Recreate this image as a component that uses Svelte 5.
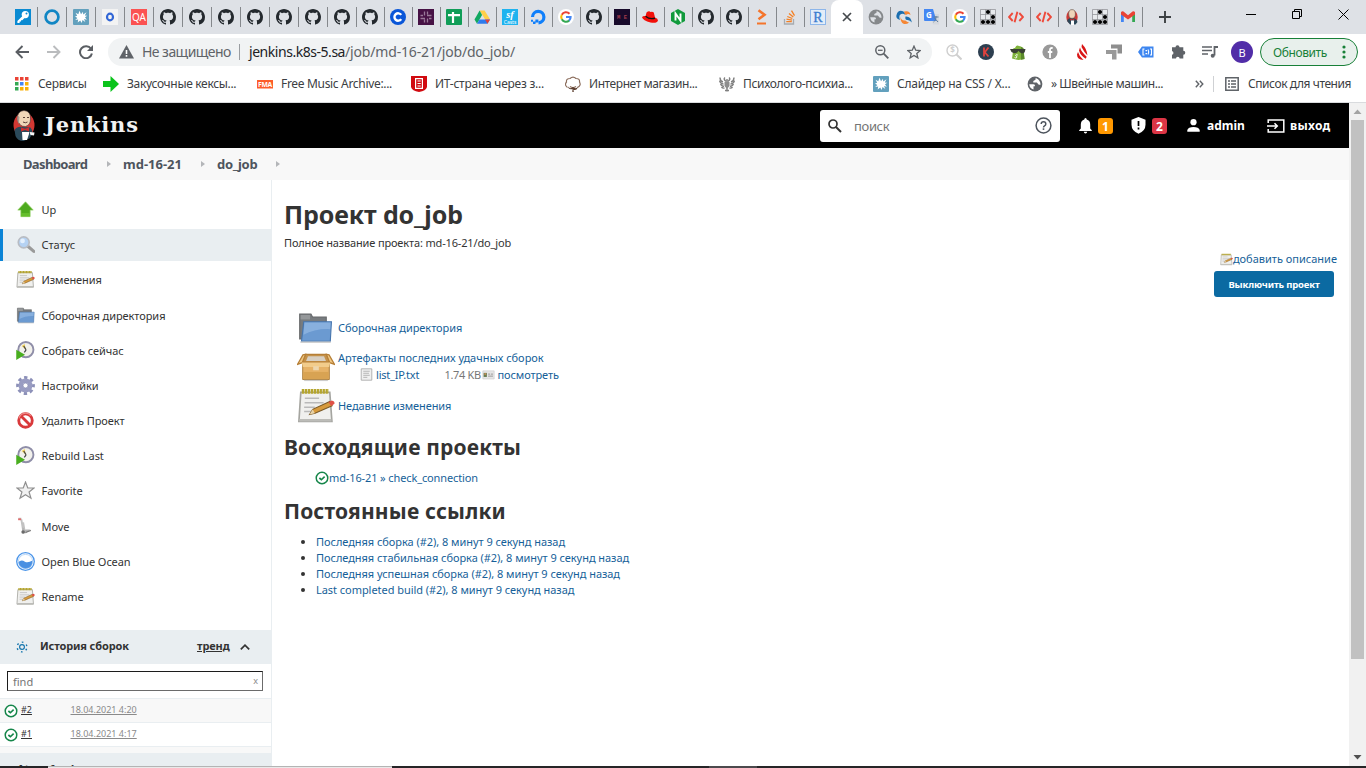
<script>
  const wide = ['key', 'ring', 'splat', 'oLetter', 'qa', 'github', 'github', 'github', 'github', 'github', 'github', 'github'];
  const narrow = ['github', 'cBlue', 'slack', 'sheet', 'drive', 'sfcasts', 'ocean', 'google', 'github', 'me', 'redhat', 'nginx', 'github', 'github', 'prompt', 'stack', 'rLetter'];
  const after = ['globe', 'swirl', 'translate', 'google', 'life', 'code', 'code', 'butler', 'life', 'gmail'];

  const bookmarks = [
    ['arrow', 'Закусочные кексы...'],
    ['fma', 'Free Music Archive:...'],
    ['itShield', 'ИТ-страна через з...'],
    ['cotton', 'Интернет магазин...'],
    ['eagle', 'Психолого-психиа...'],
    ['splat', 'Слайдер на CSS / X...'],
    ['globeDark', '» Швейные машин...']
  ];

  const extensions = ['searchCoin', 'kCircle', 'bag', 'facebook', 'flame', 'squares', 'tag', 'puzzle', 'playlist'];

  const tasks = [
    ['up', 'Up'],
    ['magnifier', 'Статус'],
    ['notepad', 'Изменения'],
    ['folder', 'Сборочная директория'],
    ['clock', 'Собрать сейчас'],
    ['gear', 'Настройки'],
    ['forbid', 'Удалить Проект'],
    ['clock', 'Rebuild Last'],
    ['star', 'Favorite'],
    ['mover', 'Move'],
    ['blueOcean', 'Open Blue Ocean'],
    ['notepad', 'Rename']
  ];

  const crumbs = ['Dashboard', 'md-16-21', 'do_job'];
  const builds = [['#2', '18.04.2021 4:20'], ['#1', '18.04.2021 4:17']];
  const permalinks = [
    'Последняя сборка (#2), 8 минут 9 секунд назад',
    'Последняя стабильная сборка (#2), 8 минут 9 секунд назад',
    'Последняя успешная сборка (#2), 8 минут 9 секунд назад',
    'Last completed build (#2), 8 минут 9 секунд назад'
  ];
</script>

{#snippet icon(name, size = 16)}
  <svg class="ico" width={size} height={size} viewBox="0 0 16 16" aria-hidden="true">
    {#if name === 'key'}
      <rect width="16" height="16" fill="#0a8ad2" />
      <circle cx="10.3" cy="5.6" r="3.6" fill="#fff" /><circle cx="11.5" cy="4.4" r="1" fill="#0a8ad2" />
      <path d="M8 6.5 2.4 12v2h2.2v-1.4H6v-1.4h1.3L10 8.6z" fill="#fff" />
    {:else if name === 'ring'}
      <circle cx="8" cy="8" r="6.4" fill="none" stroke="#1186c4" stroke-width="2.7" />
    {:else if name === 'splat'}
      <rect width="16" height="16" rx="1" fill="#62a0bd" />
      <path d="M6.5 1.8 8 5.200l2-2.400.2 2.700 3.300-2.200-1.700 3.200 2.400.3-2.200 1.400 1.800 2.500-2.800-.8 1.300 3-2.800-1.800-.8 2.800-1.500-2.500-2.500 2 .5-2.800-3 .3 2.200-1.900L2 7.500l2.200-.7-1.700-3 2.800 1.400z" fill="#fff" />
    {:else if name === 'oLetter'}
      <rect width="16" height="16" fill="#f3f3f3" /><ellipse cx="8" cy="8" rx="3" ry="3.3" fill="none" stroke="#3367d6" stroke-width="2.2" />
    {:else if name === 'qa'}
      <rect width="16" height="16" fill="#fb5252" /><text x="8" y="12.4" text-anchor="middle" font-size="11.5" textLength="14" lengthAdjust="spacingAndGlyphs" fill="#fff">QA</text>
    {:else if name === 'github'}
      <path fill="#24292e" d="M8 0C3.58 0 0 3.58 0 8c0 3.54 2.29 6.53 5.47 7.59.4.07.55-.17.55-.38 0-.19-.01-.82-.01-1.49-2.01.37-2.53-.49-2.69-.94-.09-.23-.48-.94-.82-1.13-.28-.15-.68-.52-.01-.53.63-.01 1.08.58 1.23.82.72 1.21 1.87.87 2.33.66.07-.52.28-.87.51-1.07-1.78-.2-3.64-.89-3.64-3.95 0-.87.31-1.59.82-2.15-.08-.2-.36-1.02.08-2.12 0 0 .67-.21 2.2.82.64-.18 1.32-.27 2-.27s1.36.09 2 .27c1.53-1.04 2.2-.82 2.2-.82.44 1.1.16 1.92.08 2.12.51.56.82 1.27.82 2.15 0 3.07-1.87 3.75-3.65 3.95.29.25.54.73.54 1.48 0 1.07-.01 1.93-.01 2.2 0 .21.15.46.55.38A8.01 8.01 0 0 0 16 8c0-4.42-3.58-8-8-8z" />
    {:else if name === 'cBlue'}
      <circle cx="8" cy="8" r="8" fill="#0a56d8" /><path d="M11.2 5.9A3.7 3.7 0 1 0 11.2 10.1" fill="none" stroke="#fff" stroke-width="2.4" />
    {:else if name === 'slack'}
      <rect width="16" height="16" fill="#471245" />
      <path d="M6.5 2.5v4M9.5 2.5v3M2.5 6.500H5M9 6.500h4.500M2.500 9.500H7M11 9.500h2.500M6.500 10.500v3M9.500 9.500v4" stroke="#9a7a99" stroke-width="1.3" />
    {:else if name === 'sheet'}
      <rect width="16" height="16" rx="1" fill="#109d58" /><path d="M7 3v11M2 6.2h12" stroke="#fff" stroke-width="2.2" />
    {:else if name === 'drive'}
      <path d="M5.6 1.5h5L16 10.3h-5z" fill="#ffcf48" /><path d="M5.6 1.5 8.1 6 3 14.7.5 10.5z" fill="#11a861" /><path d="M5.5 10.5H16l-2.5 4.2H3z" fill="#2f7bed" /><path d="m11 10.5 2.5 4.2 2.5-4.2z" fill="#e54335" />
    {:else if name === 'sfcasts'}
      <rect width="16" height="16" fill="#1fb3ef" /><text x="8" y="9" text-anchor="middle" font-size="10.5" font-style="italic" font-weight="700" font-family="Liberation Serif, serif" fill="#fff">sf</text><text x="8" y="14.6" text-anchor="middle" font-size="5" fill="#fff">Casts</text>
    {:else if name === 'ocean'}
      <path d="M2.5 8A5.7 5.7 0 1 1 8.5 13.8" fill="none" stroke="#0f7ffb" stroke-width="3.2" /><path d="M5.4 10.4h3V13.5h-3zM3 12.6h2.5V15H3zM1 10.8h2v2H1z" fill="#0f7ffb" />
    {:else if name === 'google'}
      <circle cx="8" cy="8" r="8" fill="#fff" />
      <path d="M8 8h4.6A4.8 4.8 0 0 1 11 11.7" fill="none" stroke="#4285f4" stroke-width="2.1" />
      <path d="M11.5 4.7A4.8 4.8 0 0 0 3.8 5.7" fill="none" stroke="#ea4335" stroke-width="2.1" />
      <path d="M3.8 5.7a4.8 4.8 0 0 0 0 4.6" fill="none" stroke="#fbbc05" stroke-width="2.1" />
      <path d="M3.8 10.3A4.8 4.8 0 0 0 11.1 11.6" fill="none" stroke="#34a853" stroke-width="2.1" />
    {:else if name === 'me'}
      <rect width="16" height="16" fill="#180a2b" /><text x="8" y="10.2" text-anchor="middle" font-size="5.5" font-family="Liberation Mono, monospace" font-weight="700" fill="#a43b4c">M E</text>
    {:else if name === 'redhat'}
      <path d="M4.5 3.5Q7 1.5 8.5 3q2-.8 3.3.5l1.2 5q3 1.2 3 3-1 3.2-7.5 2Q1 11.5 0 8.2 1 6.5 3.6 7z" fill="#f2100a" /><path d="M3.6 7.2q4 3.6 9.4 2" fill="none" stroke="#111" stroke-width="1.3" />
    {:else if name === 'nginx'}
      <path d="m8 0 7 4v8l-7 4-7-4V4z" fill="#119a3c" /><path d="M5.5 11.5v-7l5 7v-7" fill="none" stroke="#fff" stroke-width="1.9" />
    {:else if name === 'prompt'}
      <path d="m4.5 1.2 6 4.5-6 4.5" fill="none" stroke="#f4742b" stroke-width="2.6" /><path d="M3 14.5h9" stroke="#f4742b" stroke-width="2" />
    {:else if name === 'stack'}
      <path d="M2.5 10v5h9v-5" fill="none" stroke="#a7abb0" stroke-width="1.3" /><path d="M4.3 12.7h5.5M4.5 10.2l5.5.9M5.3 7.500l5 2M7 4.500l4.300 3.600M9.500 1.700l3 5" stroke="#f48024" stroke-width="1.3" />
    {:else if name === 'rLetter'}
      <rect x=".5" y=".5" width="15" height="15" fill="#e3edf8" stroke="#8db6ea" /><text x="8" y="12.7" text-anchor="middle" font-size="14" font-family="Liberation Serif, serif" fill="#3a7bd0" stroke="#3a7bd0" stroke-width=".3">R</text>
    {:else if name === 'globe' || name === 'globeDark'}
      <circle cx="8" cy="8" r="7.4" fill={name === 'globe' ? '#85888b' : '#5f6368'} />
      <path d="M2.2 8.3h4.3q1.8.2 1.5 2H6.5v3.2q-3.800-1-4.300-5.200zM8.500 2.200v1.500L6.300 5v1.600h3.500L11.500 8.500q1.500.6 2.100 0-.3-4.500-4.300-6.200z" fill={name === 'globe' ? '#dee1e6' : '#fff'} />
    {:else if name === 'swirl'}
      <path d="M.5 6Q2 .5 7 2.200q2.500 1 2.200 3.600Q6.500 3.500 3.800 6 2.800 8.500 4 11-.5 10 .5 6z" fill="#1c6fb0" /><path d="M8 2.500q6-1.500 6.500 3.500-2.500-2-4.500 0Q8.500 5.500 8 2.500z" fill="#f58634" /><path d="M9.500 7.500q5.500-.5 6.300 6-2-3-5-2.500Q8.800 10.500 9.500 7.500z" fill="#1c6fb0" /><path d="M4.500 7.500q.5 4.500 4.800 4Q11 13 13 13.500q-2 2-5 1.500-4-1.500-3.500-7.500z" fill="#f58634" />
    {:else if name === 'translate'}
      <path d="M6 5h9v10.500H9z" fill="#d5d8dd" /><path d="M0 0h9l3.500 12H1a1 1 0 0 1-1-1z" fill="#4487f2" /><text x="2" y="9" font-size="8" font-weight="700" fill="#fff">G</text><path d="M9.500 8h5M12 7v1c0 2-1 4-2.500 5m1-4 3.500 4" fill="none" stroke="#607d9b" />
    {:else if name === 'life'}
      <path d="M.5.5h15v15H.5zM5.500.5v15M10.500.5v15M.5 5.500h15M.5 10.500h15" fill="#e8eaed" stroke="#8b8d90" stroke-width=".7" /><circle cx="8" cy="3" r="2.1" /><circle cx="13" cy="8" r="2.1" /><circle cx="3" cy="13" r="2.1" /><circle cx="8" cy="13" r="2.1" /><circle cx="13" cy="13" r="2.1" />
    {:else if name === 'code'}
      <path d="M4.700 4 1 8l3.700 4M11.300 4 15 8l-3.700 4M9.400 2.800 6.600 13.200" fill="none" stroke="#ee4a3b" stroke-width="1.9" />
    {:else if name === 'butler'}
      <ellipse cx="8" cy="8" rx="5.7" ry="7" fill="#cf3835" /><path d="M3 12q1-3.500 5-3 4.500 0 5.500 4l-2 2.500H6z" fill="#2c4758" /><ellipse cx="8" cy="5" rx="3.4" ry="4.4" fill="#efd4b8" stroke="#5b4a43" stroke-width=".6" /><path d="M5 3Q4.500 6 5.500 7L4.700 4z" fill="#777" /><path d="m6.300 9.500 2 1 2-1v2.200l-2-1-2 1z" fill="#d02d2d" /><path d="M7 11.500h3V16H7z" fill="#fff" />
    {:else if name === 'gmail'}
      <path d="M1 3.500V13h2.800V6z" fill="#4285f4" /><path d="M12.200 6 15 3.500V13h-2.800z" fill="#34a853" /><path d="M1 3.300Q2 1.500 3.500 2.600L8 6.200l4.500-3.600Q14 1.500 15 3.300V5.500L8 10.500 1 5.500z" fill="#ea4335" />
    {:else if name === 'arrow'}
      <path d="M0 5h7.500V0L16 8l-8.500 8v-5H0z" fill="#0bc31c" />
    {:else if name === 'fma'}
      <rect y="4" width="16" height="8.5" fill="#fd5d2a" /><text x="8" y="11" text-anchor="middle" font-size="7.5" textLength="14" lengthAdjust="spacingAndGlyphs" font-weight="700" fill="#fff">FMA</text>
    {:else if name === 'itShield'}
      <path d="M0 0h16v11q-1 4-8 5-7-1-8-5z" fill="#d10a10" /><path d="M4.600 2.600h6.800v9.800H4.600zM6.500 5h3.200M6.500 7.500h3.200M6.500 10h3.200" fill="none" stroke="#fff" stroke-width="1.2" />
    {:else if name === 'cotton'}
      <path d="M2.500 11.500Q-1 9 1.500 6 1 2.500 5 2.500q3-2.800 6 0 4 0 3.500 3.500 2 3.500-2 5.500M5 10.500q3 2 6 0" fill="none" stroke="#8b6d5c" stroke-width="1.2" /><path d="M3 10.500q2.500 3 5 .5 3 2.500 5-.5-1 4.500-4.500 3.300L8.800 16H7.300l.2-3Q3.500 14 3 10.500z" fill="#5e4031" />
    {:else if name === 'eagle'}
      <path d="M1 1.500q0 3.500 3 4.500M.5 4.500Q1.500 8 4.500 8M1.500 8q1 2.500 3.500 2.200M2.500 11q1 1.500 3 1M15 1.500q0 3.500-3 4.500M15.500 4.500Q14.500 8 11.500 8M14.500 8q-1 2.500-3.500 2.200M13.500 11q-1 1.500-3 1M6 1.500q-2 1.500 1 4M10 1.500q2 1.500-1 4M8 3v12.500M6 14.500h4" fill="none" stroke="#808080" stroke-width="1.4" /><path d="M5.500 6h5v4L8 13l-2.500-3z" fill="#8d8d8d" />
    {:else if name === 'searchCoin'}
      <circle cx="6.5" cy="6.5" r="5.5" fill="none" stroke="#cfcfcf" stroke-width="1.4" /><path d="m10.500 10.500 5 5" stroke="#cfcfcf" stroke-width="2" /><text x="6.5" y="9.4" text-anchor="middle" font-size="8" font-weight="700" fill="#cfcfcf">$</text>
    {:else if name === 'kCircle'}
      <circle cx="8" cy="8" r="8" fill="#2d3f50" /><path d="M6 3.500v9M10.500 3.500 6.800 8.300l3.700 4.200" fill="none" stroke="#e0433e" stroke-width="1.8" />
    {:else if name === 'bag'}
      <path d="M5 4Q6.500.5 9 2l2 .5 2 1.500 1.500 11-6 1L2 14.500 3.500 4z" fill="#80b33c" /><path d="m11 3 2.500 1 1 11-3.500.7z" fill="#5b8a2b" /><path d="M0 5h15.500l-.8 3.300q-2.500 2.200-5 0L8.500 6.800 7.200 8.500Q4 10 1.500 8z" fill="#3b4135" /><path d="M7.800 11q-2-.8-2.200.5 2 1 1 2.200-1 .6-2-.2" fill="none" stroke="#fff" />
    {:else if name === 'facebook'}
      <circle cx="8" cy="8" r="7.6" fill="#999" /><path d="M10.700 4.200Q8 3.400 8 6v8M5.800 8h4.500" fill="none" stroke="#fff" stroke-width="1.8" />
    {:else if name === 'flame'}
      <path d="M8 0q5 5 5.500 11.500Q10 8 7.500 3z" fill="#d91515" /><path d="M6 3.500q1 4 6.700 9.300l-1 2Q6 11 5 6.500z" fill="#d91515" /><path d="M4 8q1 4 5.500 8Q3 15.500 3 10.500z" fill="#d91515" />
    {:else if name === 'squares'}
      <path d="M5 .5h11v9h-4.500V4.500H5z" fill="#8e8e8e" /><path d="M0 6h10.500v9.500H6V10H0z" fill="#999" />
    {:else if name === 'tag'}
      <path d="M4 2.500h11.500v11H4L0 8z" fill="#3d86f0" /><path d="M6.500 5H5v6h1.500M12 5h1.500v6H12M10 5.500q1.500 2.500 0 5" fill="none" stroke="#fff" stroke-width="1.1" /><path d="M7.500 6H9v1.300H7.500zM7.500 9H9v1.300H7.500z" fill="#fff" />
    {:else if name === 'puzzle'}
      <path d="M5.500 3.200a2 2 0 0 1 4 0h3.800v3.600a2 2 0 0 1 0 4v3.700H9.600a1.800 1.800 0 0 0-3.600 0H2V10.800a1.900 1.900 0 0 0 0-3.700V3.200z" fill="#5f6368" />
    {:else if name === 'playlist'}
      <path d="M0 3h10M0 6.500h10M0 10h6" stroke="#5f6368" stroke-width="1.7" /><path d="M16 3h-3.500v8.500" fill="none" stroke="#5f6368" stroke-width="1.8" /><circle cx="10.7" cy="11.8" r="2" fill="#5f6368" />
    {:else if name === 'up'}
      <path d="M8 1.500 14.500 8.500h-2.600v5.500H4.100V8.500H1.500z" fill="#4eaa1e" stroke="#8fcf62" stroke-width=".6" />
      <path d="M4.500 11h7v3h-7z" fill="#77cc35" opacity=".6" />
    {:else if name === 'magnifier'}
      <path d="m10 9.500 5 4.300" stroke="#9a9a9a" stroke-width="2.6" stroke-linecap="round" /><circle cx="6.5" cy="6.2" r="4.6" fill="#b5d2f3" stroke="#b8bcc3" stroke-width="1.4" /><circle cx="5.5" cy="5" r="2" fill="#e4f0fd" />
    {:else if name === 'notepad'}
      <path d="M1.600 2.200h12.200l.9 12.300H.8z" fill="#f0f0ee" stroke="#a5a5a0" stroke-width=".7" /><path d="M2 1.800h11.400" stroke="#b5a52e" stroke-width="2" stroke-dasharray="1 .25" /><path d="M3.300 4.700h6M3.200 6.600h8M3 8.500h4.500M3 10.300h3" stroke="#b9b9b9" stroke-width=".6" /><path d="M1 14h13.500" stroke="#bcbcb8" stroke-width="1" /><path d="m5.300 11.600 1.300-2.200 7.200-3.300 1 1.800-7.200 3.200z" fill="#d79a3c" stroke="#7a5a28" stroke-width=".45" /><path d="m5.300 11.600 1.300-2.200.9 1.700z" fill="#e8d3a8" /><path d="m13.300 6.400 1.300-.7q1.300.2 1.200 1.400l-1.400.9z" fill="#df5047" />
    {:else if name === 'folder'}
      <path d="M1.200 1.800h5l.7 1.300H13v9.800H1.200z" fill="#777b7e" stroke="#67696b" stroke-width=".5" /><path d="M1.600 2.200h4.200v2H1.600z" fill="#95989a" /><path d="M3 5.200h12.300l-.5 8.700H2z" fill="#6b9ad1" stroke="#4675ad" stroke-width=".5" /><path d="M3.300 5.500h11.700l-.2 3Q8 8.200 2.900 11z" fill="#94b9e4" opacity=".7" /><path d="M1.500 14.300h13.500" stroke="#c9c9c9" stroke-width=".6" />
    {:else if name === 'clock'}
      <circle cx="8.3" cy="7.3" r="6.4" fill="#f2f1ec" stroke="#8f8ea8" stroke-width="1.6" /><path d="M8.300 7.300 4.700 4.200 7.300 2.500z" fill="#f1d158" /><path d="m8.500 7.500-2-3.300M8.500 7.500 7 9.500" stroke="#454545" stroke-width="1" /><path d="M.2 7.300 7.600 11.600.2 15.900z" fill="#49ae1f" />
    {:else if name === 'gear'}
      <circle cx="8" cy="8" r="6.4" fill="none" stroke="#8c90b8" stroke-width="3" stroke-dasharray="2.7 2.327" stroke-dashoffset="1.35" /><circle cx="8" cy="8" r="4" fill="none" stroke="#999cc2" stroke-width="3.8" /><circle cx="8" cy="8" r="2" fill="#fff" stroke="#7e82ab" stroke-width=".5" />
    {:else if name === 'forbid'}
      <circle cx="8" cy="8" r="5.7" fill="#fff" stroke="#d9393b" stroke-width="2.4" /><path d="m4 4 8 8" stroke="#d9393b" stroke-width="2.4" /><path d="M2.500 6.200A5.700 5.700 0 0 1 12.500 4" fill="none" stroke="#ee8b89" stroke-width="1" />
    {:else if name === 'star'}
      <path d="m8 .9 1.900 5h5.300l-4.200 3.300 1.600 5.300L8 11.500l-4.600 3 1.600-5.300L.8 5.900h5.300z" fill="#f1f1f1" stroke="#8f8f8f" />
    {:else if name === 'mover'}
      <path d="M2 1.500h2.500M4.500 2 6 11.500M6 4.500l1 6" fill="none" stroke="#c2c2c2" stroke-width="1.6" /><path d="M1.800 1.200h2.500v1.500H1.800z" fill="#e36d6d" /><path d="M5.500 8.500 7.500 10.500H12l-3.500 3.200H5z" fill="#b4b4b4" /><circle cx="6" cy="12.7" r="1.5" fill="#6a6a6a" /><path d="m8 13 4.500-1.700" stroke="#777" />
    {:else if name === 'blueOcean'}
      <circle cx="8" cy="8" r="7.4" fill="#fff" stroke="#4b95e9" stroke-width="1.1" /><path d="M2 8.500q2.500-2.400 5.500-.3Q10 9.500 14 7.200 14 14 8 14 2.500 13.500 2 8.500z" fill="#4a90e2" /><circle cx="8" cy="8" r="6" fill="none" stroke="#8dbcf0" stroke-width=".5" />
    {:else if name === 'ok'}
      <circle cx="8" cy="8" r="6.6" fill="#fff" stroke="#16864a" stroke-width="1.7" /><path d="m5 8 2.300 2 3.700-3.500" fill="none" stroke="#16864a" stroke-width="1.9" />
    {:else if name === 'box'}
      <path d="M2.400 6.500h11.200v7.200H2.400z" fill="#e6b267" stroke="#a87a38" stroke-width=".4" /><path d="M2.600 10.500h10.800v3H2.600z" fill="#d8a353" /><path d="M3.600 3.100h8.800l1.400 3.300H2.200z" fill="#c49149" stroke="#b67f36" stroke-width=".5" /><path d="M4.600 3.900h6.800l.8 2H3.800z" fill="#d7cfc2" /><path d="M3.600 3.100 2.200 6.600.2 7.300 2.500 3.300zM12.400 3.100l1.400 3.500 2 .7-2.300-4z" fill="#efc783" stroke="#b67f36" stroke-width=".5" /><path d="m2 6.500.5 1.900h11l.5-1.900z" fill="#f2cc8b" /><path d="M6.800 8.100h2.400v1.700H6.800z" fill="#edd6ae" /><path d="M3 14.100h10" stroke="#ccc" stroke-width=".5" />
    {:else if name === 'textFile'}
      <path d="M1.500 1h13v14h-13z" fill="#f0f0f0" stroke="#a4a4a4" /><path d="M4 4h8M4 6.500h7M4 9h8M4 11.500h5" stroke="#aaa" stroke-width="1" />
    {:else if name === 'card'}
      <path d="M1 3.500h14v10H1z" fill="#e6e6e6" stroke="#c8c8c8" stroke-width=".7" /><path d="M2 6h4v5H2z" fill="#667b51" /><circle cx="4" cy="7.5" r="1.3" fill="#c18e58" /><path d="M7.500 7.500H10M11 7.500h2.500M7.500 10h6" stroke="#888" />
    {/if}
  </svg>
{/snippet}

<div class="browser">
  <header class="tabs">
    {#each wide as name}<div class="tab w29">{@render icon(name)}</div>{/each}
    {#each narrow as name, i}<div class="tab" class:last={i === narrow.length - 1}>{@render icon(name)}</div>{/each}
    <div class="tab-active">
      <svg width="10" height="10" viewBox="0 0 10 10"><path d="m1 1 8 8M9 1 1 9" stroke="#45494d" stroke-width="1.7" /></svg>
    </div>
    {#each after as name}<div class="tab">{@render icon(name)}</div>{/each}
    <svg class="plus" width="12" height="12" viewBox="0 0 12 12"><path d="M6 0v12M0 6h12" stroke="#3c4043" stroke-width="1.9" /></svg>
    <div class="winctl">
      <svg width="10" height="11" viewBox="0 0 10 11"><path d="M0 5.500h10" stroke="#000" /></svg>
      <svg width="10" height="10" viewBox="0 0 10 10"><path d="M.5 2.500h7v7h-7zM2.500 2V.5h7v7H8" fill="none" stroke="#000" /></svg>
      <svg width="11" height="11" viewBox="0 0 11 11"><path d="m.5.5 10 10M10.500.5l-10 10" stroke="#000" /></svg>
    </div>
  </header>

  <div class="toolbar">
    <svg class="nav" width="14" height="14" viewBox="0 0 14 14"><path d="M14 7H1.500M7.500 1l-6 6 6 6" fill="none" stroke="#5a5e63" stroke-width="1.9" /></svg>
    <svg class="nav" width="14" height="14" viewBox="0 0 14 14"><path d="M0 7h12.500M6.500 1l6 6-6 6" fill="none" stroke="#babcbe" stroke-width="1.9" /></svg>
    <svg class="nav" width="14" height="14" viewBox="0 0 14 14"><path d="M12 3.800A6 6 0 1 0 12.900 8.500" fill="none" stroke="#5a5e63" stroke-width="2" /><path d="M14 0v6H8z" fill="#5a5e63" /></svg>
    <div class="omnibox">
      <svg width="15" height="14" viewBox="0 0 15 14"><path d="M7.500 0 15 13.500H0z" fill="#5f6368" /><path d="M7.500 5v4M7.500 10v1.800" stroke="#fff" stroke-width="1.6" /></svg>
      <span class="insecure">Не защищено</span>
      <span class="bar"></span>
      <span class="url"><b>jenkins.k8s-5.sa</b><i>/job/md-16-21/job/do_job/</i></span>
      <svg class="zoomout" width="14" height="14" viewBox="0 0 14 14"><circle cx="5.3" cy="5.3" r="4.5" fill="none" stroke="#5f6368" stroke-width="1.5" /><path d="M3 5.300h4.600" stroke="#5f6368" stroke-width="1.3" /><path d="m8.700 8.700 4.600 4.600" stroke="#5f6368" stroke-width="1.9" /></svg>
      <svg width="14" height="14" viewBox="0 0 16 16"><path d="m8 1.300 2 4.700 5 .4-3.800 3.300 1.200 5L8 12l-4.400 2.700 1.200-5L1 6.400 6 6z" fill="none" stroke="#5f6368" stroke-width="1.5" /></svg>
    </div>
    <div class="exts">
      {#each extensions as name}{@render icon(name)}{/each}
    </div>
    <div class="avatar">В</div>
    <div class="update"><span>Обновить</span><svg width="4" height="14" viewBox="0 0 4 14"><circle cx="2" cy="2" r="1.6" /><circle cx="2" cy="7" r="1.6" /><circle cx="2" cy="12" r="1.6" /></svg></div>
  </div>

  <nav class="bookmarks">
    <svg width="14" height="14" viewBox="0 0 14 14">
      <path d="M0 0h3.500v3.500H0zM5 0h3.500v3.500H5zM10 0h3.500v3.500H10z" fill="#ea4335" /><path d="M0 5h3.500v3.500H0zM0 10h3.500v3.500H0z" fill="#34a853" /><path d="M5 5h3.500v3.500H5z" fill="#4285f4" /><path d="M10 5h3.500v3.500H10zM5 10h3.500v3.500H5zM10 10h3.500v3.500H10z" fill="#f9b004" />
    </svg>
    <span class="services">Сервисы</span>
    {#each bookmarks as [name, label], i}
      <div class="bm" class:tight={i === 3 || i === 6} class:loose={i === 2 || i === 5}>{@render icon(name)}<span>{label}</span></div>
    {/each}
    <svg class="more" width="9" height="8" viewBox="0 0 9 8"><path d="m.8.8 3 3.200-3 3.200M4.800.8l3 3.200-3 3.200" fill="none" stroke="#5f6368" stroke-width="1.4" /></svg>
    <span class="vsep"></span>
    <svg width="14" height="14" viewBox="0 0 14 14"><path d="M.8.8h12.400v12.400H.8z" fill="none" stroke="#5f6368" stroke-width="1.5" /><path d="M3 4h2M6 4h5M3 7h2M6 7h5M3 10h2M6 10h5" stroke="#5f6368" stroke-width="1.4" /></svg>
    <span class="reading">Список для чтения</span>
  </nav>

  <div class="viewport">
    <div class="page">
      <div class="jheader">
        <svg width="22" height="32" viewBox="0 0 22 32">
          <ellipse cx="11" cy="15" rx="10.5" ry="12.5" fill="#d33833" />
          <path d="M1.500 20q3-4 8-3l8 .5q2 2 2 6l-3 5-6 2.500q-6 0-8-5z" fill="#2b4a5b" />
          <path d="M4.500 9Q4 1 11 .5 18 1 17.500 9q0 6-5 7.500Q6 17 4.500 9z" fill="#f0d6b7" stroke="#433" stroke-width=".6" />
          <path d="M4.700 5.500Q3.500 10 5.800 14L6.500 7z" fill="#a89c92" /><path d="M10 7.500h2M14 7.500h2M10 12q2.500 1.500 4.500 0" stroke="#5a4036" stroke-width="1" fill="none" />
          <path d="m8 17.500 4 1.200 4-1.200v4l-4-1.500-4 1.500z" fill="#d02c2c" /><path d="M9 22h7v2l-2 6H9.500z" fill="#fff" /><path d="m16.500 22 5 .5-.5 3-3.500-.5z" fill="#f4f4f4" />
        </svg>
        <span class="brand">Jenkins</span>
        <div class="search">
          <svg width="14" height="14" viewBox="0 0 14 14"><circle cx="5" cy="5" r="4" fill="none" stroke="#333" stroke-width="1.7" /><path d="m8 8 5 5" stroke="#333" stroke-width="2" /></svg>
          <span>поиск</span>
          <svg width="17" height="17" viewBox="0 0 17 17"><circle cx="8.5" cy="8.5" r="7.4" fill="none" stroke="#4d545d" stroke-width="1.5" /><path d="M6.200 7Q6.200 4.800 8.500 4.800T10.800 7q0 1.200-1.300 1.900-1 .6-1 1.600" fill="none" stroke="#4d545d" stroke-width="1.5" /><path d="M8.500 11.300v1.600" stroke="#4d545d" stroke-width="1.6" /></svg>
        </div>
        <svg class="bell" width="13" height="16" viewBox="0 0 13 16"><path d="M6.500 0q1.200 0 1.200 1.600 3.500 1 3.500 5v4l1.600 1.600v.8H.2v-.8l1.600-1.600v-4q0-4 3.500-5Q5.300 0 6.500 0zM4.800 13.800h3.400Q8 15.600 6.500 15.600T4.800 13.800z" fill="#fff" /></svg>
        <span class="badge orange">1</span>
        <svg class="shield" width="15" height="17" viewBox="0 0 15 17"><path d="M7.500 0 14.500 2.800v5q0 6-7 9-7-3-7-9v-5z" fill="#fff" /><path d="M7.500 4v5M7.500 10.500v2" stroke="#000" stroke-width="1.7" /></svg>
        <span class="badge red">2</span>
        <svg class="person" width="13" height="13" viewBox="0 0 13 13"><circle cx="6.5" cy="3.2" r="3.1" fill="#fff" /><path d="M.3 12.700V11q1-3 6.200-3t6.200 3v1.700z" fill="#fff" /></svg>
        <b class="admin">admin</b>
        <svg class="logout" width="18" height="14" viewBox="0 0 18 14"><path d="M1.200 4V1h15.600v12H1.200v-3M0 7h10M7.500 4.200 10.300 7 7.500 9.800" fill="none" stroke="#fff" stroke-width="1.5" /></svg>
        <b class="exit">выход</b>
      </div>

      <div class="crumbs">
        {#each crumbs as c, i}
          <span class="crumb" class:first={i === 0} class:mid={i === 1}>{c}</span><svg width="4" height="6" viewBox="0 0 4 6"><path d="m0 0 4 3-4 3z" fill="#b4b6b9" /></svg>
        {/each}
      </div>

      <div class="body">
        <aside>
          <ul class="tasks">
            {#each tasks as [name, label], i}
              <li class:active={i === 1}>{@render icon(name, 19)}<span>{label}</span></li>
            {/each}
          </ul>
          <div class="history-head">
            <svg width="12" height="12" viewBox="0 0 12 12"><circle cx="6" cy="6" r="2.4" fill="none" stroke="#1676ae" stroke-width="1.2" /><circle cx="6" cy="6" r="4.9" fill="none" stroke="#1676ae" stroke-width="1.4" stroke-dasharray="1.7 3.431" stroke-dashoffset="3.4" /></svg>
            <b>История сборок</b>
            <b class="trend">тренд</b>
            <svg width="10" height="6" viewBox="0 0 10 6"><path d="m.8 5.400 4.200-4.200 4.200 4.200" fill="none" stroke="#333" stroke-width="1.7" /></svg>
          </div>
          <div class="find-wrap"><div class="find"><span>find</span><i>x</i></div></div>
          {#each builds as [num, date], i}
            <div class="build" class:odd={i === 0}>{@render icon('ok', 14)}<u class="num">{num}</u><u class="date">{date}</u></div>
          {/each}
          <div class="gap"></div>
          <div class="feeds"><b>Atom feed</b></div>
        </aside>

        <main>
          <h1>Проект do_job</h1>
          <div class="full">Полное название проекта: md-16-21/do_job</div>
          <div class="desc">
            <div class="adddesc">{@render icon('notepad', 13)}<span>добавить описание</span></div>
            <button>Выключить проект</button>
          </div>
          <div class="row r1">{@render icon('folder', 36)}<span>Сборочная директория</span></div>
          <div class="row r2">{@render icon('box', 38)}
            <div class="art"><span>Артефакты последних удачных сборок</span>
              <div class="file">{@render icon('textFile', 13)}<span class="fname">list_IP.txt</span><span class="size">1.74 KB</span>{@render icon('card', 13)}<span class="view">посмотреть</span></div>
            </div>
          </div>
          <div class="row r3">{@render icon('notepad', 38)}<span>Недавние изменения</span></div>
          <h2>Восходящие проекты</h2>
          <div class="up">{@render icon('ok', 14)}<span>md-16-21 » check_connection</span></div>
          <h2>Постоянные ссылки</h2>
          <ul class="links">
            {#each permalinks as p}<li><span>{p}</span></li>{/each}
          </ul>
        </main>
      </div>
    </div>
    <div class="scroll">
      <svg width="17" height="17" viewBox="0 0 17 17"><path d="m4.500 11 4-4.500 4 4.500z" fill="#a3a3a3" /></svg>
      <div class="thumb"></div>
      <svg width="17" height="17" viewBox="0 0 17 17"><path d="m4.500 6 4 4.500 4-4.500z" fill="#505050" /></svg>
    </div>
  </div>
  <footer class="taskbar"><span class="t1"></span><span class="t2"></span></footer>
</div>

<style>
  :global(body) { margin: 0; overflow: hidden; }
  .browser { width: 1366px; height: 768px; display: flex; flex-direction: column; overflow: hidden; background: #fff; font-family: 'Noto Sans', 'Open Sans', sans-serif; font-size: 11px; color: #333; }
  .browser *, .browser *::before { box-sizing: border-box; }
  svg { display: block; flex: none; }
  ul { list-style: none; margin: 0; padding: 0; }
  span, b, u, i { white-space: nowrap; }

  .tabs { height: 34px; flex: none; display: flex; align-items: center; background: #dee1e6; padding-left: 9px; }
  .tab { width: 28px; height: 20px; flex: none; border-right: 1px solid #85888c; display: flex; align-items: center; padding-left: 5px; }
  .tab.w29 { width: 29px; padding-left: 6px; }
  .tab.last { border-color: transparent; }
  .tab-active { width: 32px; height: 34px; margin-left: -2px; background: #fff; border-radius: 8px 8px 0 0; display: flex; align-items: center; justify-content: center; flex: none; }
  .plus { margin-left: 16px; }
  .winctl { display: flex; align-items: center; gap: 36px; margin-left: 75px; height: 28px; align-self: flex-start; }

  .toolbar { height: 36px; flex: none; display: flex; align-items: center; padding-left: 15px; }
  .nav { margin-right: 18px; }
  .omnibox { width: 824px; height: 28px; margin-left: -3px; border-radius: 14px; background: #f1f3f4; display: flex; align-items: center; padding-left: 11px; font-size: 14px; color: #5f6368; flex: none; }
  .insecure { margin-left: 8px; width: 89px; letter-spacing: -.55px; }
  .insecure, .url { padding-bottom: 1px; }
  .bar { width: 1px; height: 16px; background: #9a9da1; margin: 0 9px 0 8px; }
  .url b { font-weight: 400; color: #202124; letter-spacing: -.46px; }
  .url i { font-style: normal; letter-spacing: -.17px; }
  .zoomout { margin: 0 18px 0 auto; }
  .zoomout + svg { margin-right: 11px; }
  .exts { display: flex; gap: 16px; margin-left: 14px; }
  .avatar { width: 22px; height: 22px; border-radius: 50%; background: #512da8; color: #fff; font-size: 11px; display: grid; place-items: center; margin-left: 13px; flex: none; }
  .update { width: 98px; height: 28px; margin-left: 7px; border: 1px solid #188038; border-radius: 14px; background: #e8f0ec; color: #188038; font-size: 12px; letter-spacing: -.4px; display: flex; align-items: center; justify-content: space-between; padding: 0 11px 0 12px; flex: none; }
  .update svg { fill: #188038; }

  .bookmarks { height: 33px; flex: none; display: flex; align-items: center; padding: 0 0 5px 15px; font-size: 12px; letter-spacing: -.32px; color: #3c4043; border-bottom: 1px solid #d9dbde; }
  .services { width: 65px; margin-left: 9px; }
  .bm { width: 154px; display: flex; align-items: center; gap: 8px; flex: none; }
  .bm.tight, .reading { letter-spacing: -.43px; }
  .bm.loose { letter-spacing: -.24px; }
  .more { margin-left: 14px; }
  .vsep { width: 1px; height: 16px; background: #cfd1d4; margin: 0 11px 0 9px; }
  .reading { margin-left: 9px; }

  .viewport { flex: 1; min-height: 0; display: flex; }
  .page { width: 1349px; display: flex; flex-direction: column; flex: none; overflow: hidden; }
  .jheader { height: 45px; flex: none; background: #000; display: flex; align-items: center; padding-left: 13px; color: #fff; }
  .brand { margin-left: 10px; width: 93px; font: 700 21px/30px 'DejaVu Serif', 'Liberation Serif', serif; letter-spacing: .8px; color: #f2f2f2; flex: none; padding-bottom: 1px; }
  .search { width: 240px; height: 32px; margin-left: 682px; background: #fff; border-radius: 3px; display: flex; align-items: center; padding: 0 8px; color: #757575; font-size: 13px; letter-spacing: -.35px; flex: none; }
  .search span { margin: 0 auto 0 12px; }
  .bell { margin-left: 19px; }
  .badge { width: 15px; height: 16px; border-radius: 3px; display: grid; place-items: center; font-weight: 700; font-size: 12px; margin-left: 6px; flex: none; }
  .orange { background: #ff9800; }
  .red { background: #dc3545; margin-left: 6px; }
  .shield { margin-left: 18px; }
  .person { margin-left: 20px; }
  .admin, .exit { font-size: 12px; width: 39px; margin-left: 7px; }
  .logout { margin-left: 21px; }
  .exit { margin-left: 5px; letter-spacing: .3px; }

  .crumbs { height: 32px; flex: none; background: #f8f8f8; display: flex; align-items: center; padding-left: 23px; font-weight: 700; font-size: 13px; color: #4d545d; }
  .crumb { width: 59px; margin-left: 12px; letter-spacing: -.25px; }
  .crumb.first { width: 84px; margin-left: 0; letter-spacing: -.65px; }
  .crumb.mid { width: 78px; letter-spacing: 0; }

  .body { flex: 1; min-height: 0; display: flex; }
  aside { width: 272px; flex: none; border-right: 1px solid #e9eef1; padding-top: 14px; overflow: hidden; display: flex; flex-direction: column; }
  .tasks { flex: none; height: 436px; }
  .tasks li { height: 32px; margin-bottom: 3.18px; display: flex; align-items: center; gap: 6.5px; padding: 0 0 1px 16px; letter-spacing: -.07px; }
  .tasks li.active { background: #e9eef1; border-left: 3px solid #0b84d6; padding-left: 13px; }
  .history-head { height: 34px; flex: none; background: #e9eef1; display: flex; align-items: center; padding-left: 16px; letter-spacing: -.13px; }
  .history-head b { width: 157px; margin-left: 12px; padding-bottom: 3px; }
  .history-head .trend { text-decoration: underline; width: 43px; margin-left: 0; }
  .find-wrap { height: 34px; flex: none; padding: 7px 8px 7px 7px; }
  .find { height: 20px; border: 1px solid #6b6b6b; border-top-color: #1c1c1c; border-left-color: #1c1c1c; display: flex; align-items: center; justify-content: space-between; padding: 0 4px 0 5px; color: #757575; }
  .find i { font-style: normal; font-size: 9px; color: #8a8a8a; padding-bottom: 1px; }
  .build { height: 24px; flex: none; border-top: 1px solid #e9eef1; display: flex; align-items: center; padding-left: 4px; font-size: 9px; color: #8a8a8a; }
  .build.odd { background: #f8f8f8; }
  .build u { padding-bottom: 3px; }
  .build .num { color: #333; margin-left: 3px; width: 49.5px; }
  .gap { height: 7px; flex: none; background: #f8f8f8; border-top: 1px solid #e9eef1; }
  .feeds { height: 13px; background: #e9eef1; padding: 9px 0 0 17px; overflow: hidden; line-height: 14px; }

  main { flex: 1; padding-left: 12px; color: #333; line-height: 16px; }
  h1 { margin: 17px 0 0; font-size: 25px; line-height: 34px; letter-spacing: -.1px; }
  .full { margin-top: 4px; letter-spacing: -.15px; }
  .desc { display: flex; flex-direction: column; align-items: flex-end; }
  .adddesc { display: flex; align-items: center; color: #165f99; margin-right: 12px; }
  button { width: 120px; height: 26px; margin: 4px 15px 0 0; padding: 0; border: 0; border-radius: 3px; background: #0b6aa2; color: #fff; font: 700 9.5px 'Noto Sans', sans-serif; letter-spacing: -.17px; }
  .row { display: flex; align-items: center; color: #165f99; padding-left: 13px; gap: 3px; letter-spacing: -.05px; }
  .r1 { height: 36px; margin-top: 13px; gap: 5px; }
  .r2 { height: 39px; padding-top: 1px; letter-spacing: -.02px; }
  .r3 { height: 39px; padding-top: 2px; letter-spacing: -.1px; }
  .file { display: flex; align-items: center; padding: 1px 0 0 22px; }
  .fname { margin-left: 3px; width: 68.5px; letter-spacing: -.2px; }
  .size { color: #777; width: 37px; letter-spacing: -.35px; }
  .view { margin-left: 3px; letter-spacing: -.1px; }
  h2 { margin: 8px 0 0; font-size: 21px; line-height: 30px; letter-spacing: .16px; }
  .up { display: flex; align-items: center; padding-left: 31px; color: #165f99; margin: 8px 0 10px; letter-spacing: -.12px; }
  .links { padding-top: 8px; }
  .links li { display: flex; align-items: center; height: 16px; padding-left: 17px; letter-spacing: -.045px; }
  .links li::before { content: ''; width: 4px; height: 4px; border-radius: 50%; background: #333; margin-right: 11px; }
  .links span { color: #165f99; }

  .scroll { width: 17px; background: #f1f1f1; display: flex; flex-direction: column; }
  .thumb { width: 13px; height: 539px; margin: 0 auto auto; background: #c1c1c1; }
  .taskbar { height: 2px; flex: none; background: #262527; display: flex; }
  .t1 { width: 344px; margin-left: 48px; background: #e9e9e9; border-top: 1px solid #b4b4b4; }
  .t2 { width: 48px; margin-left: 317px; background: #4c4a4d; }
</style>
